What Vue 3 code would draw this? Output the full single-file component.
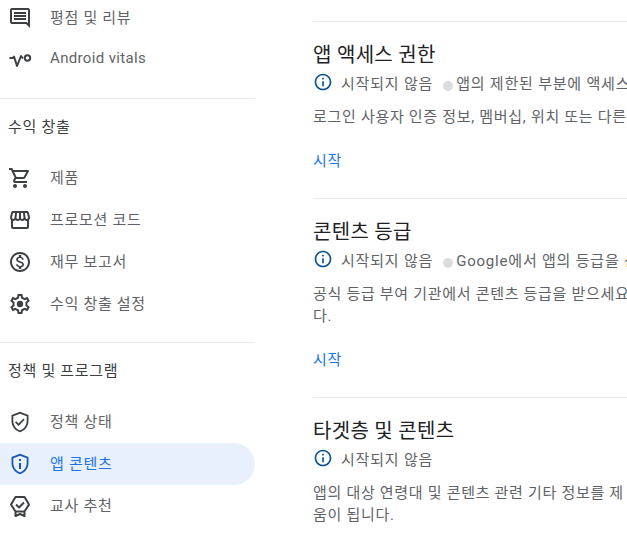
<script setup>
const icons = {
  review: 'M21.99 4c0-1.1-.89-2-1.99-2H4c-1.1 0-2 .9-2 2v12c0 1.1.9 2 2 2h14l4 4-.01-18zM20 4v13.17L18.83 16H4V4h16zM6 12h12v2H6zm0-3h12v2H6zm0-3h12v2H6z',
  vitals: 'M1.5 10H5l1-1.5L9 18l4-10 2 2.5M19.5 7.3a2.7 2.7 0 1 1 0 5.4 2.7 2.7 0 0 1 0-5.4z',
  cart: 'M15.55 13c.75 0 1.41-.41 1.75-1.03l3.58-6.49c.37-.66-.11-1.48-.87-1.48H5.21l-.94-2H1v2h2l3.6 7.59-1.35 2.44C4.52 15.37 5.48 17 7 17h12v-2H7l1.1-2h7.45zM6.16 6h12.15l-2.76 5H8.53L6.16 6zM7 18c-1.1 0-1.99.9-1.99 2S5.9 22 7 22s2-.9 2-2-.9-2-2-2zm10 0c-1.1 0-1.99.9-1.99 2s.89 2 1.99 2 2-.9 2-2-.9-2-2-2z',
  store: 'M21.9 8.89l-1.05-4.37c-.22-.9-1-1.52-1.91-1.52H5.05c-.9 0-1.69.63-1.9 1.52L2.1 8.89c-.24 1.02-.02 2.06.62 2.88.08.11.19.19.28.29V19c0 1.1.9 2 2 2h14c1.1 0 2-.9 2-2v-6.94c.09-.09.2-.18.28-.28.64-.82.87-1.87.62-2.89zm-2.99-3.9l1.05 4.37c.1.42.01.84-.25 1.17-.14.18-.44.47-.94.47-.61 0-1.14-.49-1.21-1.14L16.98 5l1.93-.01zM13 5h1.96l.54 4.52c.05.39-.07.78-.33 1.07-.22.26-.54.41-.95.41-.67 0-1.22-.59-1.22-1.31V5zM8.49 9.52L9.04 5H11v4.69c0 .72-.55 1.31-1.29 1.31-.34 0-.65-.15-.89-.41-.25-.29-.37-.68-.33-1.07zm-4.45-.16L5.05 5h1.97l-.58 4.86c-.08.65-.6 1.14-1.21 1.14-.49 0-.8-.29-.93-.47-.27-.32-.36-.75-.26-1.17zM5 19v-6.03c.08.01.15.03.23.03.87 0 1.66-.36 2.24-.95.6.6 1.4.95 2.31.95.87 0 1.65-.36 2.23-.93.59.57 1.39.93 2.29.93.84 0 1.64-.35 2.24-.95.58.59 1.37.95 2.24.95.08 0 .15-.02.23-.03V19H5z',
  money: 'M12 2C6.48 2 2 6.48 2 12s4.48 10 10 10 10-4.48 10-10S17.52 2 12 2zm0 18c-4.41 0-8-3.59-8-8s3.59-8 8-8 8 3.59 8 8-3.59 8-8 8zm.31-8.86c-1.77-.45-2.34-.94-2.34-1.67 0-.84.79-1.43 2.1-1.43 1.38 0 1.9.66 1.94 1.64h1.71c-.05-1.34-.87-2.57-2.49-2.97V5H10.9v1.69c-1.51.32-2.72 1.3-2.72 2.81 0 1.79 1.49 2.69 3.66 3.21 1.95.46 2.34 1.15 2.34 1.87 0 .53-.39 1.39-2.1 1.39-1.6 0-2.23-.72-2.32-1.64H8.04c.1 1.7 1.36 2.66 2.86 2.97V19h2.34v-1.67c1.52-.29 2.72-1.16 2.73-2.77-.01-2.2-1.9-2.96-3.66-3.42z',
  gear: 'M19.43 12.98c.04-.32.07-.64.07-.98 0-.34-.03-.66-.07-.98l2.11-1.65c.19-.15.24-.42.12-.64l-2-3.46c-.09-.16-.26-.25-.44-.25-.06 0-.12.01-.17.03l-2.49 1c-.52-.4-1.08-.73-1.69-.98l-.38-2.65C14.46 2.18 14.25 2 14 2h-4c-.25 0-.46.18-.49.42l-.38 2.65c-.61.25-1.17.59-1.69.98l-2.49-1c-.06-.02-.12-.03-.18-.03-.17 0-.34.09-.43.25l-2 3.46c-.13.22-.07.49.12.64l2.11 1.65c-.04.32-.07.65-.07.98 0 .33.03.66.07.98l-2.11 1.65c-.19.15-.24.42-.12.64l2 3.46c.09.16.26.25.44.25.06 0 .12-.01.17-.03l2.49-1c.52.4 1.08.73 1.69.98l.38 2.65c.03.24.24.42.49.42h4c.25 0 .46-.18.49-.42l.38-2.65c.61-.25 1.17-.59 1.69-.98l2.49 1c.06.02.12.03.18.03.17 0 .34-.09.43-.25l2-3.46c.12-.22.07-.49-.12-.64l-2.11-1.65zm-1.98-1.71c.04.31.05.52.05.73 0 .21-.02.43-.05.73l-.14 1.13.89.7 1.08.84-.7 1.21-1.27-.51-1.04-.42-.9.68c-.43.32-.84.56-1.25.73l-1.06.43-.16 1.13-.2 1.35h-1.4l-.19-1.35-.16-1.13-1.06-.43c-.43-.18-.83-.41-1.23-.71l-.91-.7-1.06.43-1.27.51-.7-1.21 1.08-.84.89-.7-.14-1.13c-.03-.31-.05-.54-.05-.74s.02-.43.05-.73l.14-1.13-.89-.7-1.08-.84.7-1.21 1.27.51 1.04.42.9-.68c.43-.32.84-.56 1.25-.73l1.06-.43.16-1.13.2-1.35h1.39l.19 1.35.16 1.13 1.06.43c.43.18.83.41 1.23.71l.91.7 1.06-.43 1.27-.51.7 1.21-1.07.85-.89.7.14 1.13zM12 8.8a3.2 3.2 0 1 0 0 6.4 3.2 3.2 0 0 0 0-6.4z',
  shieldCheck: 'M12 1.8 3.5 5v6.1c0 5.1 3.6 9.9 8.5 11.1 4.9-1.2 8.5-6 8.5-11.1V5L12 1.8zm6.7 9.3c0 4.2-2.8 8.1-6.7 9.3-3.9-1.2-6.7-5.1-6.7-9.3V6.2L12 3.7l6.7 2.5v4.9zM8.2 11.2 7 12.4l3.5 3.5 6.2-6.2-1.2-1.2-5 5-2.3-2.3z',
  shieldInfo: 'M12 1.8 3.5 5v6.1c0 5.1 3.6 9.9 8.5 11.1 4.9-1.2 8.5-6 8.5-11.1V5L12 1.8zm6.7 9.3c0 4.2-2.8 8.1-6.7 9.3-3.9-1.2-6.7-5.1-6.7-9.3V6.2L12 3.7l6.7 2.5v4.9zM11 7h2v2h-2zm0 4h2v6h-2z',
  badge: 'M7.5 3h9l4.5 7.5-4.5 7h-9L3 10.5zM8 10.5l3 3 5-5M7.5 17.5V22l4.5-2 4.5 2v-4.5',
  info: 'M12 2C6.48 2 2 6.48 2 12s4.48 10 10 10 10-4.48 10-10S17.52 2 12 2zm0 18c-4.41 0-8-3.59-8-8s3.59-8 8-8 8 3.59 8 8-3.59 8-8 8zm-1-9h2v6h-2zm0-4h2v2h-2z'
}

const groups = [
  {
    items: [
      { label: '평점 및 리뷰', icon: 'review' },
      { label: 'Android vitals', icon: 'vitals', stroke: true, latin: true }
    ]
  },
  {
    title: '수익 창출',
    items: [
      { label: '제품', icon: 'cart' },
      { label: '프로모션 코드', icon: 'store' },
      { label: '재무 보고서', icon: 'money' },
      { label: '수익 창출 설정', icon: 'gear' }
    ]
  },
  {
    title: '정책 및 프로그램',
    items: [
      { label: '정책 상태', icon: 'shieldCheck' },
      { label: '앱 콘텐츠', icon: 'shieldInfo', active: true },
      { label: '교사 추천', icon: 'badge', stroke: true }
    ]
  }
]

const tasks = [
  {
    title: '앱 액세스 권한',
    note: '앱의 제한된 부분에 액세스',
    lines: ['로그인 사용자 인증 정보, 멤버십, 위치 또는 다른'],
    link: true
  },
  {
    title: '콘텐츠 등급',
    note: 'Google에서 앱의 등급을 산',
    lines: ['공식 등급 부여 기관에서 콘텐츠 등급을 받으세요', '다.'],
    link: true
  },
  {
    title: '타겟층 및 콘텐츠',
    lines: ['앱의 대상 연령대 및 콘텐츠 관련 기타 정보를 제', '움이 됩니다.']
  }
]
</script>

<template>
  <div class="page">
    <aside class="sidebar">
      <section v-for="(group, i) in groups" :key="i" class="nav-group">
        <h3 v-if="group.title" class="nav-title">{{ group.title }}</h3>
        <a
          v-for="item in group.items"
          :key="item.label"
          class="nav-item"
          :class="{ active: item.active, latin: item.latin }"
        >
          <svg class="nav-icon" :class="{ stroked: item.stroke }" viewBox="0 0 24 24">
            <path :d="icons[item.icon]" fill-rule="evenodd" />
          </svg>
          <span class="nav-label">{{ item.label }}</span>
        </a>
      </section>
    </aside>

    <main class="content">
      <section v-for="task in tasks" :key="task.title" class="task">
        <h2>{{ task.title }}</h2>
        <div class="status">
          <svg class="info-icon" viewBox="0 0 24 24" fill="currentColor">
            <path :d="icons.info" />
          </svg>
          <span>시작되지 않음</span>
          <template v-if="task.note">
            <i class="dot"></i>
            <span class="note">{{ task.note }}</span>
          </template>
        </div>
        <p class="desc">
          <span v-for="line in task.lines" :key="line">{{ line }}</span>
        </p>
        <a v-if="task.link" class="start">시작</a>
      </section>
    </main>
  </div>
</template>

<style>
html,
body {
  margin: 0;
  background: #fff;
  overflow: hidden;
}
</style>

<style scoped>
.page {
  display: flex;
  width: 627px;
  height: 543px;
  overflow: hidden;
  font-family: Roboto, "Noto Sans CJK KR", sans-serif;
  font-size: 15px;
  letter-spacing: 0.7px;
  color: #5f6368;
}

.sidebar {
  flex: none;
  width: 255px;
  margin-top: -3px;
}

.nav-group {
  padding-bottom: 17px;
  margin-bottom: 13px;
  border-bottom: 1px solid #e8eaed;
}

.nav-group:last-child {
  border-bottom: none;
}

.nav-title {
  margin: 0 0 15px;
  padding-left: 8px;
  font-size: 15px;
  font-weight: 400;
  line-height: 30px;
  color: #3c4043;
}

.nav-item {
  display: flex;
  align-items: center;
  gap: 18px;
  height: 42px;
  padding-left: 8px;
  border-radius: 0 21px 21px 0;
}

.nav-item.latin {
  letter-spacing: 0.35px;
}

.nav-label {
  margin-bottom: 4px;
}

.nav-icon {
  flex: none;
  width: 24px;
  height: 24px;
  fill: #3c4043;
}

.nav-icon.stroked {
  fill: none;
  stroke: #3c4043;
  stroke-width: 2;
  stroke-linejoin: round;
}

.nav-item.active {
  background: #e8f0fe;
  color: #1a73e8;
}

.nav-item.active .nav-icon {
  fill: #1558b0;
}

.content {
  flex: 1;
  min-width: 0;
  margin-top: 21px;
  margin-left: 58px;
}

.task {
  border-top: 1px solid #e8eaed;
  padding: 19px 0 26px;
  white-space: nowrap;
}

.task h2 {
  margin: 0;
  font-size: 20px;
  font-weight: 400;
  letter-spacing: 0.3px;
  line-height: 28px;
  color: #202124;
}

.status {
  display: flex;
  align-items: center;
  height: 24px;
  margin-top: 1px;
  letter-spacing: 0.8px;
}

.info-icon {
  flex: none;
  width: 20px;
  height: 20px;
  margin-right: 8px;
  color: #0b5394;
}

.dot {
  flex: none;
  width: 10px;
  height: 10px;
  margin: 7px 3px 0 10px;
  border-radius: 50%;
  background: #dadce0;
}

.desc {
  margin: 12px 0 0;
  line-height: 22px;
}

.desc span {
  display: block;
}

.start {
  display: block;
  margin-top: 22px;
  line-height: 22px;
  color: #1a73e8;
}
</style>
